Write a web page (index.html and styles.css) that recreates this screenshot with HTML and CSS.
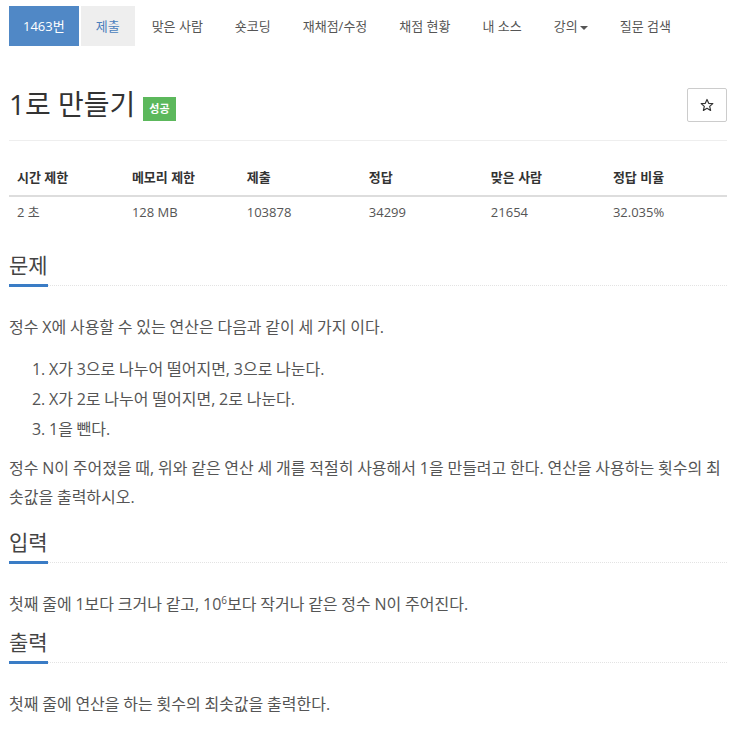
FILE: index.html
```html
<!DOCTYPE html>
<html lang="ko">
<head>
    <meta charset="UTF-8">
    <title>1로 만들기</title>
    <link rel="stylesheet" href="styles.css">
</head>
<body>
<div class="container">
    <ul class="nav-pills">
        <li class="active">1463번</li>
        <li class="current">제출</li>
        <li>맞은 사람</li>
        <li>숏코딩</li>
        <li>재채점/수정</li>
        <li>채점 현황</li>
        <li>내 소스</li>
        <li>강의<span class="caret"></span></li>
        <li>질문 검색</li>
    </ul>

    <div class="title-row">
        <div class="title">
            <h1>1로 만들기</h1>
            <span class="label-success">성공</span>
        </div>
        <button class="star-btn">
            <svg width="14" height="14" viewBox="0 0 24 24"><path d="M12 2.5l2.9 6.6 7.1.6-5.4 4.7 1.6 7-6.2-3.7-6.2 3.7 1.6-7L2 9.7l7.1-.6z" fill="none" stroke="#333" stroke-width="2" stroke-linejoin="round"/></svg>
        </button>
    </div>
    <div class="divider"></div>

    <table class="info-table">
        <thead>
        <tr>
            <th class="col-a">시간 제한</th>
            <th class="col-a">메모리 제한</th>
            <th class="col-b">제출</th>
            <th class="col-b">정답</th>
            <th class="col-b">맞은 사람</th>
            <th class="col-b">정답 비율</th>
        </tr>
        </thead>
        <tbody>
        <tr>
            <td>2 초</td>
            <td>128 MB</td>
            <td>103878</td>
            <td>34299</td>
            <td>21654</td>
            <td>32.035%</td>
        </tr>
        </tbody>
    </table>

    <section class="section section-first">
        <div class="headline"><h2>문제</h2></div>
        <div class="text">
            <p>정수 X에 사용할 수 있는 연산은 다음과 같이 세 가지 이다.</p>
            <ol>
                <li>X가 3으로 나누어 떨어지면, 3으로 나눈다.</li>
                <li>X가 2로 나누어 떨어지면, 2로 나눈다.</li>
                <li>1을 뺀다.</li>
            </ol>
            <p>정수 N이 주어졌을 때, 위와 같은 연산 세 개를 적절히 사용해서 1을 만들려고 한다. 연산을 사용하는 횟수의 최솟값을 출력하시오.</p>
        </div>
    </section>

    <section class="section">
        <div class="headline"><h2>입력</h2></div>
        <div class="text">
            <p>첫째 줄에 1보다 크거나 같고, 10<sup>6</sup>보다 작거나 같은 정수 N이 주어진다.</p>
        </div>
    </section>

    <section class="section">
        <div class="headline"><h2>출력</h2></div>
        <div class="text">
            <p>첫째 줄에 연산을 하는 횟수의 최솟값을 출력한다.</p>
        </div>
    </section>
</div>
</body>
</html>
```

FILE: styles.css
```css
body {
    margin: 0;
    font-family: "Open Sans", "Noto Sans CJK KR", sans-serif;
    color: #555;
    background-color: #fff;
}
.container {
    width: 718px;
    margin-left: 9px;
}
.nav-pills {
    display: flex;
    list-style: none;
    margin: 6px 0 0;
    padding: 0;
}
.nav-pills li {
    height: 40px;
    line-height: 40px;
    padding: 0 15px;
    margin-right: 2px;
    font-size: 13px;
    color: #555;
}
.nav-pills li.active {
    padding: 0 14px;
    background-color: #5088c6;
    color: #fff;
}
.nav-pills li.current {
    background-color: #eee;
    color: #4a7fbd;
}
.caret {
    display: inline-block;
    margin-left: 2px;
    vertical-align: middle;
    border-top: 4px solid #555;
    border-left: 4px solid transparent;
    border-right: 4px solid transparent;
}
.title-row {
    display: flex;
    justify-content: space-between;
    align-items: center;
    margin-top: 40px;
    height: 36px;
}
.title {
    display: flex;
    align-items: center;
}
.title h1 {
    margin: 0;
    font-size: 28px;
    font-weight: normal;
    color: #333;
    line-height: 36px;
}
.label-success {
    margin: 9px 0 0 8px;
    height: 24px;
    line-height: 24px;
    padding: 0 6px;
    font-size: 11px;
    font-weight: bold;
    color: #fff;
    background-color: #5cb85c;
}
.star-btn {
    display: flex;
    align-items: center;
    justify-content: center;
    width: 40px;
    height: 34px;
    margin-top: 1px;
    padding: 0;
    background-color: #fff;
    border: 1px solid #ccc;
    border-radius: 2px;
}
.divider {
    margin-top: 18px;
    border-top: 1px solid #eee;
}
.info-table {
    width: 100%;
    margin-top: 18px;
    border-collapse: collapse;
    font-size: 13px;
}
.info-table th {
    text-align: left;
    padding: 8px;
    line-height: 20px;
    color: #333;
    font-weight: bold;
    border-bottom: 2px solid #ddd;
}
.info-table td {
    padding: 5px 8px 7px;
    line-height: 20px;
}
.col-a {
    width: 16%;
}
.col-b {
    width: 17%;
}
.section {
    margin-top: 23px;
}
.section + .section {
    margin-top: 5px;
}
.section-first .text {
    padding-bottom: 2px;
}
.headline {
    border-bottom: 1px dotted #e3e3e3;
}
.headline h2 {
    display: inline-block;
    margin: 0 0 -2px;
    padding-bottom: 6px;
    font-size: 21px;
    line-height: 26px;
    font-weight: normal;
    color: #444;
    border-bottom: 3px solid #3a7cc5;
}
.text {
    padding-top: 27px;
    font-size: 16px;
    line-height: 29px;
    word-spacing: -0.4px;
}
.text p {
    margin: 0 0 10px;
}
.text ol {
    margin: 0 0 10px;
    padding: 2px 0 0 40px;
}
.text ol li {
    line-height: 30px;
}
sup {
    font-size: 10px;
    line-height: 0;
}
```
